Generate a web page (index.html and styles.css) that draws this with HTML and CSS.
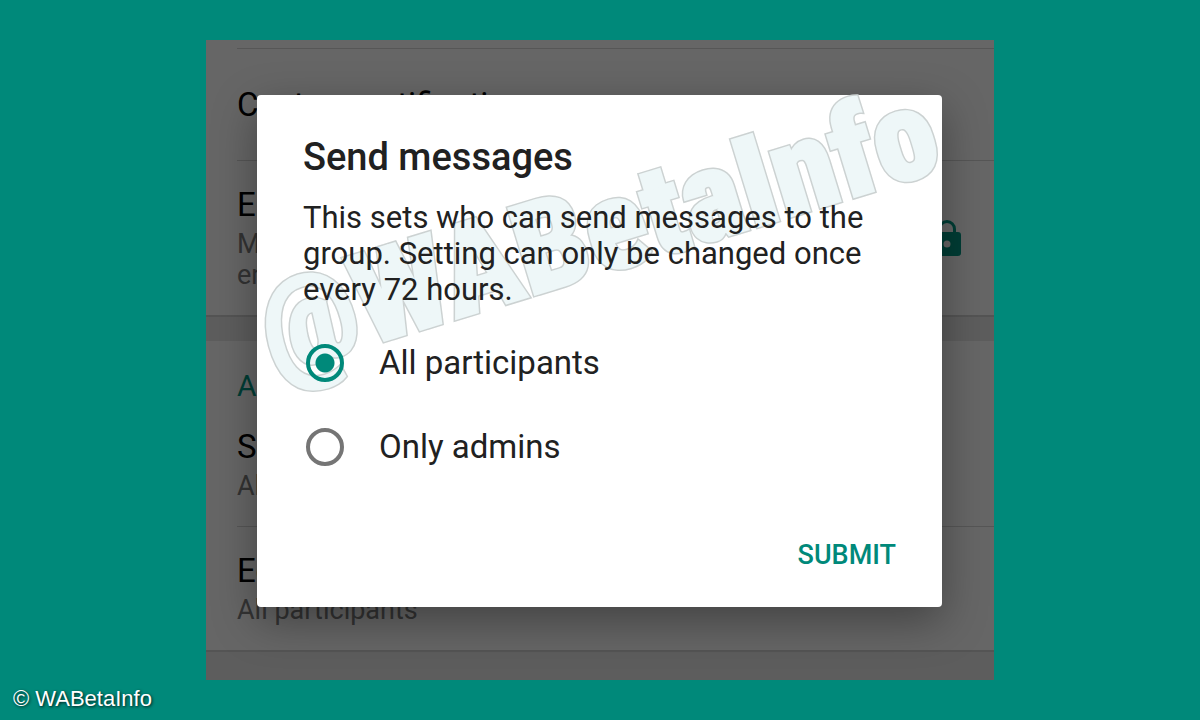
FILE: index.html
```
<!DOCTYPE html>
<html lang="en">

<head>
    <meta charset="UTF-8">
    <meta name="viewport" content="width=device-width, initial-scale=1.0">
    <title>Send messages</title>
    <link rel="stylesheet" href="styles.css">
</head>

<body>
    <main class="screen">
        <!-- Group info page behind the dialog -->
        <div class="settings">
            <section class="section">
                <div class="row row-cut"></div>
                <div class="row row-single">
                    <div class="row-title">Custom notifications</div>
                </div>
                <div class="row row-icon">
                    <div>
                        <div class="row-title">Encryption</div>
                        <div class="row-sub">Messages to this group are secured with<br>end-to-end encryption.</div>
                    </div>
                    <svg class="lock" viewBox="0 0 28 36" aria-hidden="true">
                        <path fill-rule="evenodd" d="M5 12V9a9 9 0 0 1 18 0v3h2a3 3 0 0 1 3 3v18a3 3 0 0 1-3 3H3a3 3 0 0 1-3-3V15a3 3 0 0 1 3-3zM8 12h12V9A6 6 0 0 0 8 9zM14 20.500a3.500 3.500 0 1 0 0 7a3.500 3.500 0 1 0 0-7z" />
                    </svg>
                </div>
            </section>

            <section class="section">
                <h2 class="section-title">Admin settings</h2>
                <div class="row">
                    <div class="row-title">Send messages</div>
                    <div class="row-sub">All participants</div>
                </div>
                <div class="row">
                    <div class="row-title">Edit group info</div>
                    <div class="row-sub">All participants</div>
                </div>
            </section>
        </div>

        <div class="overlay">
            <form class="dialog" role="dialog" aria-labelledby="dialog-title">
                <div class="watermark" data-text="@WABetaInfo" aria-hidden="true">@WABetaInfo</div>
                <h1 id="dialog-title">Send messages</h1>
                <p>This sets who can send messages to the group. Setting can only be changed once every 72 hours.</p>
                <div class="options">
                    <label class="option">
                        <input type="radio" name="who" value="all" checked>
                        All participants
                    </label>
                    <label class="option">
                        <input type="radio" name="who" value="admins">
                        Only admins
                    </label>
                </div>
                <button type="button" class="submit">SUBMIT</button>
            </form>
        </div>
    </main>

    <footer class="credit">© WABetaInfo</footer>
</body>

</html>
```
FILE: styles.css
```
* {
    margin: 0;
    padding: 0;
    box-sizing: border-box;
}

body {
    font-family: Roboto, "Liberation Sans", sans-serif;
    background: #00897a;
    min-height: 100vh;
    padding: 40px 0 0;
    display: flex;
    flex-direction: column;
    color: #212121;
}

.screen {
    position: relative;
    margin: 0 206px;
    min-height: 640px;
    background: #e8e8e8;
    overflow: hidden;
}

.section {
    background: #fff;
    border-bottom: 2px solid #d2d2d2;
    margin-bottom: 24px;
}

.section:last-child {
    margin-bottom: 0;
}

.section-title {
    padding: 28px 31px 0;
    font-size: 30px;
    line-height: 34px;
    font-weight: 400;
    color: #009a85;
}

.row {
    margin-left: 31px;
    padding: 24px 33px 24px 0;
    border-bottom: 1px solid #d6d6d6;
}

.row:last-child {
    border-bottom: none;
}

.row-cut {
    padding: 8px 0 0;
}

.row-single {
    padding: 36px 33px 35px 0;
}

.row-icon {
    display: flex;
    justify-content: space-between;
    align-items: center;
}

.row-title {
    font-size: 33px;
    line-height: 40px;
    color: #000;
}

.row-sub {
    margin-top: 4px;
    font-size: 27px;
    line-height: 31px;
    color: #808080;
}

.lock {
    width: 28px;
    height: 36px;
    fill: #009a85;
}

.overlay {
    position: absolute;
    inset: 0;
    padding: 55px 52px 73px 51px;
    background: rgba(0, 0, 0, 0.6);
    display: flex;
}

.dialog {
    position: relative;
    flex: 1;
    display: flex;
    flex-direction: column;
    padding: 39px 46px 32px;
    background: #fff;
    border-radius: 4px;
    box-shadow: 0 14px 44px rgba(0, 0, 0, 0.35);
}

.dialog h1 {
    font-size: 38px;
    line-height: 46px;
    font-weight: 500;
}

.dialog p {
    margin-top: 20px;
    font-size: 31px;
    line-height: 36px;
}

.dialog h1,
.dialog p,
.options {
    position: relative;
}

.options {
    margin-top: 13px;
}

.option {
    display: flex;
    align-items: center;
    gap: 35px;
    height: 84px;
    padding-left: 3px;
    font-size: 33px;
    line-height: 40px;
}

.option input {
    appearance: none;
    width: 38px;
    height: 38px;
    border: 4px solid #757575;
    border-radius: 50%;
}

.option input:checked {
    border-color: #00897a;
    background: radial-gradient(circle, #00897a 9px, transparent 10px);
}

.submit {
    align-self: flex-end;
    margin-top: auto;
    border: none;
    background: none;
    color: #00897a;
    font-family: inherit;
    font-size: 27px;
    line-height: 40px;
    font-weight: 500;
    cursor: pointer;
}

/* Watermark lies across the dialog, under its text */
.watermark {
    position: absolute;
    left: 26px;
    top: 163px;
    font-family: "Roboto Condensed", "Open Sans Condensed", "Noto Sans Condensed", "Liberation Sans", sans-serif;
    font-size: 127px;
    line-height: 144px;
    font-weight: 900;
    white-space: nowrap;
    color: #eef7f8;
    -webkit-text-stroke: 5px #ccd2d2;
    transform: rotate(-17deg);
    transform-origin: 0 100%;
    pointer-events: none;
}

.watermark::after {
    content: attr(data-text);
    position: absolute;
    left: 0;
    top: 0;
    -webkit-text-stroke: 2px #eef7f8;
}

.credit {
    padding: 6px 13px;
    font-family: "Liberation Sans", Arial, sans-serif;
    font-size: 22px;
    line-height: 26px;
    color: #fff;
    text-shadow: 1px 1px 3px rgba(0, 0, 0, 0.8);
}
```
